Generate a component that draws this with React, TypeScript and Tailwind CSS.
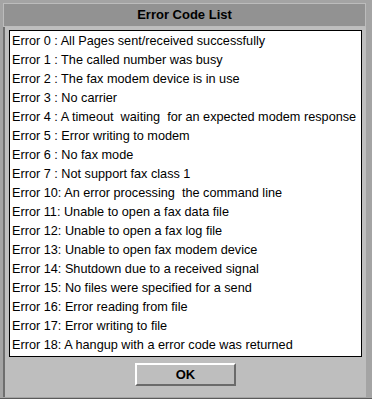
const errors: string[] = [
  'Error 0 : All Pages sent/received successfully',
  'Error 1 : The called number was busy',
  'Error 2 : The fax modem device is in use',
  'Error 3 : No carrier',
  'Error 4 : A timeout  waiting  for an expected modem response',
  'Error 5 : Error writing to modem',
  'Error 6 : No fax mode',
  'Error 7 : Not support fax class 1',
  'Error 10: An error processing  the command line',
  'Error 11: Unable to open a fax data file',
  'Error 12: Unable to open a fax log file',
  'Error 13: Unable to open fax modem device',
  'Error 14: Shutdown due to a received signal',
  'Error 15: No files were specified for a send',
  'Error 16: Error reading from file',
  'Error 17: Error writing to file',
  'Error 18: A hangup with a error code was returned',
];

export default function App() {
  return (
    <div
      className="w-[372px] h-[399px] bg-[#a4a4a4] flex flex-col pt-[3px] pl-[3px] pr-[6px] pb-[1px] border-b border-[#5a5a5a]"
      style={{ fontFamily: '"Liberation Sans", Arial, sans-serif' }}
    >
      <div className="h-[24px] shrink-0 bg-[#929292] border border-[#bcbcbc] flex items-center justify-center">
        <span className="text-[13px] font-bold text-black">Error Code List</span>
      </div>
      <div className="flex-1 bg-[#bebebe] border-l-2 border-[#6e6e6e] flex flex-col pt-[3px] pl-[4px] pr-[4px]">
        <div className="h-[327px] bg-white border border-black pl-[2px] pt-[1px]">
          {errors.map((e) => (
            <div key={e} className="h-[19px] leading-[19px] text-[12.7px] text-black whitespace-pre">
              {e}
            </div>
          ))}
        </div>
        <div className="flex justify-center pt-[6px]">
          <button className="w-[101px] h-[23px] bg-[#bebebe] border-t-2 border-l-2 border-white border-b-2 border-r-2 border-b-[#6a6a6a] border-r-[#6a6a6a] text-[13px] font-bold text-black flex items-center justify-center">
            OK
          </button>
        </div>
      </div>
    </div>
  );
}
